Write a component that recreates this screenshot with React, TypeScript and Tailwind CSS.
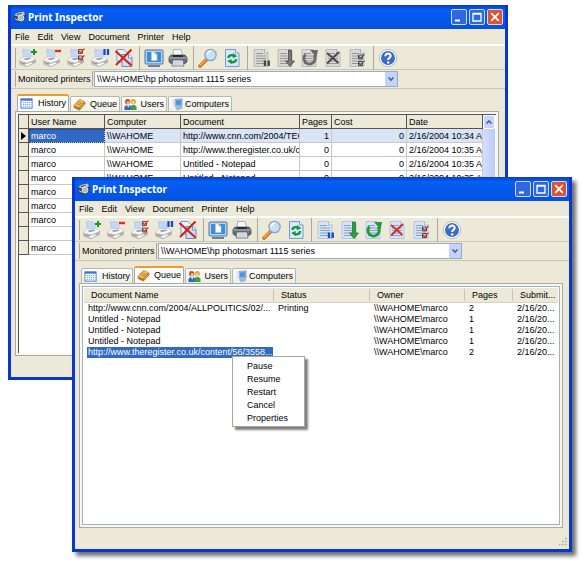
import type { ReactNode } from 'react'

type Tab = 'History' | 'Queue' | 'Users' | 'Computers'

const menus = ['File', 'Edit', 'View', 'Document', 'Printer', 'Help']

const historyRows = [
  { user: 'marco', computer: '\\\\WAHOME', doc: 'http://www.cnn.com/2004/TEC', pages: '1', cost: '0', date: '2/16/2004 10:34 AM' },
  { user: 'marco', computer: '\\\\WAHOME', doc: 'http://www.theregister.co.uk/c', pages: '0', cost: '0', date: '2/16/2004 10:35 AM' },
  { user: 'marco', computer: '\\\\WAHOME', doc: 'Untitled - Notepad', pages: '0', cost: '0', date: '2/16/2004 10:35 AM' },
  { user: 'marco', computer: '\\\\WAHOME', doc: 'Untitled - Notepad', pages: '0', cost: '0', date: '2/16/2004 10:35 AM' },
  { user: 'marco' },
  { user: 'marco' },
  { user: 'marco' },
  { user: '' },
  { user: 'marco' },
]

const queueRows = [
  { doc: 'http://www.cnn.com/2004/ALLPOLITICS/02/...', status: 'Printing', pages: '2' },
  { doc: 'Untitled - Notepad', status: '', pages: '1' },
  { doc: 'Untitled - Notepad', status: '', pages: '1' },
  { doc: 'Untitled - Notepad', status: '', pages: '1' },
  { doc: 'http://www.theregister.co.uk/content/56/3558...', status: '', pages: '2' },
]

function Icon({ children }: { children: ReactNode }) {
  return (
    <svg viewBox="0 0 20 20" className="size-5" aria-hidden="true">
      {children}
    </svg>
  )
}

function PrinterBase() {
  return (
    <>
      <path d="M4.5 1.5 12 2 13.5 9.5 6 11.5Z" fill="#c3d8f8" stroke="#a9bfe2" strokeWidth=".6" />
      <path d="M1.5 12.5 5.5 9 14 8.5 17.5 11 17.5 14.5 9 18.8 2 16.3Z" fill="#c4c4c2" stroke="#a3a3a1" strokeWidth=".6" />
      <path d="M1.5 12.5 5.5 9 14 8.5 17.5 11 9.5 14.5Z" fill="#f7f7f6" />
      <path d="M5.5 11 7.2 10 12.6 9.6 13.4 10.4 8.5 12.2Z" fill="#9aa6b8" />
      <path d="M2.5 14.5 9.5 16.8 17 13" fill="none" stroke="#8a8a88" strokeWidth=".9" />
      <path d="M6 16.5 13 14.2 15.5 15 9 18.5Z" fill="#fff" stroke="#a8a8a6" strokeWidth=".5" />
    </>
  )
}

function PagePath({ color }: { color: boolean }) {
  return (
    <>
      <path d="M2 1.5H13L16 4.5V18.5H2Z" fill={color ? '#d6e4fa' : '#d9d9d7'} stroke={color ? '#a6bddf' : '#b1b1ae'} strokeWidth=".8" />
      <path d="M12.5 1.5V5H16" fill="#fff" stroke={color ? '#8faad2' : '#999'} strokeWidth=".8" />
      <path d="M4 5.5H11M4 8H14M4 10.5H14M4 13H14M4 15.5H14" stroke={color ? '#8195b8' : '#8f8f8f'} strokeWidth=".9" />
    </>
  )
}

function AddPrinter() {
  return (
    <Icon>
      <PrinterBase />
      <path d="M16 1V7M13 4H19" stroke="#129a2b" strokeWidth="2" />
    </Icon>
  )
}

function RemovePrinter() {
  return (
    <Icon>
      <PrinterBase />
      <path d="M13 3H19" stroke="#e0301c" strokeWidth="2.4" />
    </Icon>
  )
}

function PrinterOptions() {
  return (
    <Icon>
      <PrinterBase />
      <path d="M12.5 1.5H16.5V5.5H12.5ZM12.5 8H16.5V12H12.5Z" fill="#f0d4cc" stroke="#6b4a42" />
      <path d="m13 3 1.5 1.7L18.5.7M13 9.6l1.5 1.7 4-4" fill="none" stroke="#d3341c" strokeWidth="1.2" />
    </Icon>
  )
}

function PausePrinter() {
  return (
    <Icon>
      <PrinterBase />
      <path d="M14.5 1V7M18 1V7" stroke="#1746d8" strokeWidth="2.3" />
    </Icon>
  )
}

function DeleteDocuments() {
  return (
    <Icon>
      <path d="M3 1.5H10L13 4.5V14H3Z" fill="#e8f0fc" stroke="#7f9bc8" />
      <path d="M8 6.5H15L18 9.5V18.5H8Z" fill="#cfdef5" stroke="#6d8abc" />
      <path d="M14.5 6.5V10H18" fill="#fff" stroke="#6d8abc" />
      <path d="M1.5 3 17.5 17.5M17.5 1.5 2 17" stroke="#cf2417" strokeWidth="2.1" />
    </Icon>
  )
}

function Monitor() {
  return (
    <Icon>
      <rect x="1" y="2" width="18" height="14" rx="1" fill="#b3d3ee" stroke="#4b73a5" />
      <rect x="3" y="4" width="14" height="10" fill="#3f8ed5" />
      <path d="M7.5 4H11L13 6V12.5H7.5Z" fill="#fff" stroke="#a8c7e9" strokeWidth=".5" />
      <path d="M11 4V6H13" fill="none" stroke="#5d8ec6" strokeWidth=".7" />
      <path d="M4 18H16" stroke="#68859d" strokeWidth="2" />
    </Icon>
  )
}

function PrintIcon() {
  return (
    <Icon>
      <path d="M5.5 1.5H13L15 8H5Z" fill="#f4f7fc" stroke="#8a93a2" strokeWidth=".7" />
      <path d="M3 7H17L19 9.5V14L17 15.5H3L1 14V9.5Z" fill="#686d77" stroke="#454950" strokeWidth=".7" />
      <path d="M5 7H15V9H5Z" fill="#282c33" />
      <path d="M1.5 10H18.5" stroke="#b5bac4" />
      <path d="M5 12H15L16 18H4Z" fill="#eef2f8" stroke="#60656d" strokeWidth=".8" />
      <path d="M6 14H14M5.5 16H14.5" stroke="#a2adbd" strokeWidth=".8" />
    </Icon>
  )
}

function Magnifier() {
  return (
    <Icon>
      <path d="M8 12 2 18" stroke="#b86818" strokeWidth="3.6" strokeLinecap="round" />
      <path d="M7.5 12 2 17.5" stroke="#f2a447" strokeWidth="1.8" strokeLinecap="round" />
      <circle cx="12.5" cy="7" r="5.6" fill="#c7e1fb" stroke="#8ba4c3" strokeWidth="1.4" />
      <path d="M9.2 6.5A3.7 3.7 0 0 1 13 3.3" fill="none" stroke="#fff" strokeWidth="1.5" />
    </Icon>
  )
}

function RefreshPage() {
  return (
    <Icon>
      <path d="M3.5 1.5H13.5L17 5V18.5H3.5Z" fill="#d7e8fb" stroke="#779bcb" />
      <path d="M13.5 1.5V5H17" fill="#fff" stroke="#779bcb" />
      <path d="M6.5 10C6.5 7 9.5 6.5 12 8M14 11C14 14 11 15 8.5 13.5" fill="none" stroke="#16973a" strokeWidth="2.4" />
      <path d="M11 5 15.3 8.3 10.8 10.3ZM9.5 11 5.2 13 9.8 16.3Z" fill="#16973a" />
    </Icon>
  )
}

function PauseJob({ color }: { color: boolean }) {
  return (
    <Icon>
      <PagePath color={color} />
      <path d="M13 12.5V18M16.7 12.5V18" stroke={color ? '#1748e0' : '#454545'} strokeWidth="2.4" />
    </Icon>
  )
}

function ResumeJob({ color }: { color: boolean }) {
  return (
    <Icon>
      <PagePath color={color} />
      <path d="M12.5 2H15.5V13H18.5L14 18.5 9.5 13H12.5Z" fill={color ? '#2da143' : '#777'} stroke={color ? '#187d2f' : '#4b4b4b'} strokeWidth=".8" />
    </Icon>
  )
}

function RestartJob({ color }: { color: boolean }) {
  return (
    <Icon>
      <PagePath color={color} />
      <path d="M5.5 6.5A5.6 5.6 0 1 0 14 7" fill="none" stroke={color ? '#20993b' : '#6a6a6a'} strokeWidth="3" />
      <path d="M10 2H18L16.5 9.5Z" fill={color ? '#20993b' : '#6a6a6a'} />
    </Icon>
  )
}

function CancelJob({ color }: { color: boolean }) {
  return (
    <Icon>
      <PagePath color={color} />
      <path d="M3 5 14.5 15M15 4 3 15.5" stroke={color ? '#d33120' : '#484848'} strokeWidth="1.8" />
    </Icon>
  )
}

function JobProperties({ color }: { color: boolean }) {
  return (
    <Icon>
      <PagePath color={color} />
      <path d="M10.5 7H14.5V11H10.5ZM10.5 13.5H14.5V17.5H10.5Z" fill={color ? '#f3ded8' : '#ddd'} stroke="#444" />
      <path d="m11 8.5 1.5 1.7 4-4M11 15l1.5 1.7 4-4" fill="none" stroke={color ? '#d33120' : '#555'} strokeWidth="1.2" />
    </Icon>
  )
}

function HelpIcon() {
  return (
    <Icon>
      <circle cx="10" cy="10" r="8.6" fill="#fff" stroke="#b4bdd0" />
      <circle cx="10" cy="10" r="7" fill="#3b6cca" />
      <path d="M7.3 8.2C7.3 4.5 13 4.8 12.7 8 12.5 9.7 10.2 9.7 10.2 12" fill="none" stroke="#fff" strokeWidth="2" />
      <circle cx="10.2" cy="14.4" r="1.2" fill="#fff" />
    </Icon>
  )
}

function AppIcon() {
  return (
    <svg viewBox="0 0 14 14" className="size-3.5" aria-hidden="true">
      <path d="M1 5 5 2 11 1 13 5 12 10 6 13 1 10Z" fill="#39424f" />
      <path d="M1 5 5 2.5 11 1.5 12 4.5 6 7Z" fill="#b9c3cf" />
      <path d="M4 4.6 8.5 3.4" stroke="#39424f" />
      <circle cx="8" cy="8" r="3" fill="#a6bdd5" stroke="#e6ecf2" strokeWidth=".8" />
      <path d="M2 8.5 5 10.5" stroke="#d8dee5" />
    </svg>
  )
}

function TabIcon({ name }: { name: Tab }) {
  return (
    <svg viewBox="0 0 14 14" className="size-[13px] shrink-0" aria-hidden="true">
      {name === 'History' && (
        <>
          <rect x="1" y="2" width="12" height="10" fill="#fff" stroke="#3a78cf" />
          <path d="M1 3H13" stroke="#3a78cf" strokeWidth="2" />
          <path d="M3 6H11M3 8H11M3 10H11" stroke="#6c9ade" strokeDasharray="1.5 .7" />
        </>
      )}
      {name === 'Queue' && (
        <>
          <path d="M1 8 7 1.5 12.5 4 13 6.5 7 13 1.5 10.5Z" fill="#b57918" stroke="#7d510f" strokeWidth=".6" />
          <path d="M1 8 7 1.5 12.5 4 6.5 10.2Z" fill="#f0ba55" />
          <path d="M3.5 6 9 8.2M5 4 10.8 6.5" stroke="#b8791d" strokeWidth=".8" />
          <path d="m8 10.5 4-4" stroke="#fae1a8" strokeWidth=".8" />
        </>
      )}
      {name === 'Users' && (
        <>
          <circle cx="4" cy="4" r="2.8" fill="#d5452b" />
          <circle cx="4.5" cy="5" r="1.8" fill="#f0bd8c" />
          <path d="M0.5 13V9.5L3 7.5H6L8 9.5V13Z" fill="#2c68ca" />
          <circle cx="10" cy="4" r="2.8" fill="#d8ac35" />
          <circle cx="9.8" cy="5" r="1.8" fill="#f3cda0" />
          <path d="M7 13V9L9 7.5H11.5L13.5 9.5V13Z" fill="#3c9e4c" />
          <path d="m3.3 7.5 1.2 3 1.3-3" fill="#fff" />
        </>
      )}
      {name === 'Computers' && (
        <>
          <path d="M4 1.5 12 .8V8.5L4.5 9Z" fill="#9fc5f0" stroke="#6d91bf" strokeWidth=".7" />
          <path d="M5.3 2.7 10.8 2.2V7.2L5.5 7.7Z" fill="#4c94e2" />
          <path d="M1.5 2 4 1.5V10L2 9Z" fill="#dce4ed" />
          <path d="M5 10.5 11 9 12 11 6.5 13Z" fill="#a9bdd2" stroke="#7990aa" strokeWidth=".5" />
        </>
      )}
    </svg>
  )
}

function ToolButton({ label, children }: { label: string; children: ReactNode }) {
  return (
    <button type="button" aria-label={label} className="flex h-6 w-6 items-center justify-center">
      {children}
    </button>
  )
}

function Separator() {
  return <div className="mr-0.5 ml-[3px] h-6 w-px bg-[#aca899]" />
}

function Toolbar({ color }: { color: boolean }) {
  return (
    <div className="flex h-[26px] items-center border-t-2 border-b border-t-white border-b-[#c9c6b8] pl-1">
      <div className="h-5 w-px bg-[#aca899]" />
      <ToolButton label="Add printer"><AddPrinter /></ToolButton>
      <ToolButton label="Remove printer"><RemovePrinter /></ToolButton>
      <ToolButton label="Printer options"><PrinterOptions /></ToolButton>
      <ToolButton label="Pause printer"><PausePrinter /></ToolButton>
      <ToolButton label="Delete all documents"><DeleteDocuments /></ToolButton>
      <Separator />
      <ToolButton label="Monitor"><Monitor /></ToolButton>
      <ToolButton label="Print"><PrintIcon /></ToolButton>
      <Separator />
      <ToolButton label="Find"><Magnifier /></ToolButton>
      <ToolButton label="Refresh"><RefreshPage /></ToolButton>
      <Separator />
      <ToolButton label="Pause job"><PauseJob color={color} /></ToolButton>
      <ToolButton label="Resume job"><ResumeJob color={color} /></ToolButton>
      <ToolButton label="Restart job"><RestartJob color={color} /></ToolButton>
      <ToolButton label="Cancel job"><CancelJob color={color} /></ToolButton>
      <ToolButton label="Job properties"><JobProperties color={color} /></ToolButton>
      <Separator />
      <ToolButton label="Help"><HelpIcon /></ToolButton>
    </div>
  )
}

function TitleBar() {
  const box = 'flex size-4 items-center justify-center rounded-[2px] border border-[#cfdcf8]'
  return (
    <div className="flex h-6 items-center bg-linear-to-b from-[#0a3fc0] via-[#0560f5] via-20% to-[#0450e0] px-0.5">
      <AppIcon />
      <h1 className="ml-px flex-1 font-['Noto_Sans',sans-serif] text-[10px] font-bold text-white">Print Inspector</h1>
      <div className="flex gap-0.5">
        <button type="button" aria-label="Minimize" className={`${box} bg-[#2f67e3]`}>
          <svg viewBox="0 0 14 14" className="size-3.5"><path d="M3 10.5H8" stroke="#fff" strokeWidth="2" /></svg>
        </button>
        <button type="button" aria-label="Maximize" className={`${box} bg-[#2f67e3]`}>
          <svg viewBox="0 0 14 14" className="size-3.5"><path d="M3 3.5H11V11H3ZM3 4H11" fill="none" stroke="#fff" strokeWidth="1.3" /></svg>
        </button>
        <button type="button" aria-label="Close" className={`${box} bg-[#dc5432]`}>
          <svg viewBox="0 0 14 14" className="size-3.5"><path d="M3.2 3.2 10.8 10.8M10.8 3.2 3.2 10.8" stroke="#fff" strokeWidth="1.8" /></svg>
        </button>
      </div>
    </div>
  )
}

const tabs: { name: Tab; width: string }[] = [
  { name: 'History', width: 'w-[52px]' },
  { name: 'Queue', width: 'w-[50px]' },
  { name: 'Users', width: 'w-[46px]' },
  { name: 'Computers', width: 'w-16' },
]

function TabStrip({ active }: { active: Tab }) {
  return (
    <div role="tablist" className="flex h-[17px] items-end gap-px pl-0.5">
      {tabs.map(({ name, width }) => (
        <button
          key={name}
          type="button"
          role="tab"
          aria-selected={name === active}
          className={`flex items-center justify-between rounded-t-[2px] border border-b-0 px-0.5 ${width} ${
            name === active
              ? 'h-[17px] border-x-[#a5a9a6] border-t-2 border-t-[#ef9a2a] bg-[#fcfcfa] pb-px'
              : 'h-[15px] border-[#b4b7b2] bg-linear-to-b from-[#fcfcfa] to-[#f0efe6]'
          }`}
        >
          <TabIcon name={name} />
          {name}
        </button>
      ))}
    </div>
  )
}

function InspectorWindow({ id, active, className, children }: { id: string; active: Tab; className: string; children: ReactNode }) {
  return (
    <section className={`absolute flex h-[375px] flex-col border-x-[3px] border-b-[3px] border-[#0a37cb] bg-[#ece9d8] ${className}`}>
      <TitleBar />
      <nav className="flex h-[15px] items-center gap-2 pl-1">
        {menus.map((m) => (
          <button key={m} type="button">{m}</button>
        ))}
      </nav>
      <Toolbar color={active === 'Queue'} />
      <div className="flex h-[19px] items-center border-b border-[#c9c6b8] pl-1">
        <div className="h-4 w-px bg-[#aca899]" />
        <label htmlFor={id} className="ml-0.5 w-[74px] whitespace-nowrap">Monitored printers</label>
        <div className="mr-px h-4 w-px bg-[#aca899]" />
        <div className="relative">
          <select id={id} className="h-4 w-[304px] appearance-none border border-[#9caabb] bg-white pl-0.5">
            <option>{'\\\\WAHOME\\hp photosmart 1115 series'}</option>
          </select>
          <span className="pointer-events-none absolute top-px right-px flex h-3.5 w-3 items-center justify-center bg-[#c3d3fb]">
            <svg viewBox="0 0 8 8" className="size-2"><path d="M1.5 2.5 4 5 6.5 2.5" fill="none" stroke="#4d6185" strokeWidth="1.6" /></svg>
          </span>
        </div>
      </div>
      <div className="flex min-h-0 flex-1 flex-col pt-[5px] pr-1.5 pl-1">
        <TabStrip active={active} />
        {children}
      </div>
      <footer className="flex h-[21px] items-end justify-end p-0.5">
        {active === 'Queue' && (
          <svg viewBox="0 0 10 10" className="size-2.5">
            <path d="M8 1.5H9.5M5 4.5H6.5M8 4.5H9.5M2 7.5H3.5M5 7.5H6.5M8 7.5H9.5" stroke="#aaa692" strokeWidth="1.5" />
          </svg>
        )}
      </footer>
    </section>
  )
}

function HistoryPane() {
  const head = 'border-r border-b border-r-[#55544d] border-b-[#55544d] bg-[#ece9d8] pl-0.5 text-left font-normal'
  const cell = 'overflow-hidden border-r border-b border-[#c8c8c4] px-0.5'
  return (
    <div className="flex min-h-0 flex-1 border border-[#a9aaa0] bg-[#f8f7f2] p-0.5">
      <div className="flex min-w-0 flex-1 border-t border-l border-[#55544d] bg-white">
        <div className="min-w-0 flex-1">
          <table className="w-full table-fixed border-separate border-spacing-0 whitespace-nowrap">
            <colgroup>
              <col className="w-[10px]" />
              <col className="w-[76px]" />
              <col className="w-[76px]" />
              <col />
              <col className="w-8" />
              <col className="w-[75px]" />
              <col className="w-[76px]" />
            </colgroup>
            <thead>
              <tr className="h-3.5">
                <th className={head} aria-label="Current row" />
                <th className={head}>User Name</th>
                <th className={head}>Computer</th>
                <th className={head}>Document</th>
                <th className={head}>Pages</th>
                <th className={head}>Cost</th>
                <th className={head}>Date</th>
              </tr>
            </thead>
            <tbody>
              {historyRows.map((r, i) => (
                <tr key={i} className={`h-3.5 ${i === 0 ? 'bg-[#d9e4f7]' : ''}`}>
                  <td className="border-r border-b border-[#55544d] bg-[#ece9d8]">
                    {i === 0 && (
                      <svg viewBox="0 0 8 10" className="h-2.5 w-2"><path d="M2 1 7 5 2 9Z" /></svg>
                    )}
                  </td>
                  <td className={`${cell} ${i === 0 ? 'bg-[#316ac5] text-white outline-1 -outline-offset-1 outline-dotted outline-[#1d3c72]' : ''}`}>{r.user}</td>
                  <td className={cell}>{r.computer}</td>
                  <td className={cell}>{r.doc}</td>
                  <td className={`${cell} text-right`}>{r.pages}</td>
                  <td className={`${cell} text-right`}>{r.cost}</td>
                  <td className={cell}>{r.date}</td>
                </tr>
              ))}
            </tbody>
          </table>
        </div>
        <div className="mr-px w-3 bg-linear-to-r from-[#d5e0fd] to-[#b9cbf8]">
          <button type="button" aria-label="Scroll up" className="flex h-3.5 w-3 items-center justify-center rounded-[2px] border border-white bg-[#c6d5fc]">
            <svg viewBox="0 0 8 8" className="size-2"><path d="M1.5 5.5 4 3 6.5 5.5" fill="none" stroke="#4d6185" strokeWidth="1.6" /></svg>
          </button>
        </div>
      </div>
    </div>
  )
}

function QueuePane() {
  const head = 'border-b border-[#d6d2c2] bg-[#ece9d8] text-left font-normal'
  const rule = 'block h-3 border-l border-[#c7c5b2] pl-[7px] leading-3'
  return (
    <div className="min-h-0 flex-1 border border-[#a9aaa0] bg-[#f8f7f2] p-0.5">
      <div className="h-full border border-[#9db0c4] bg-white px-px pt-px">
        <table className="w-full table-fixed border-separate border-spacing-0 whitespace-nowrap">
          <colgroup>
            <col />
            <col className="w-24" />
            <col className="w-[95px]" />
            <col className="w-12" />
            <col className="w-[46px]" />
          </colgroup>
          <thead>
            <tr className="h-[15px]">
              <th className={`${head} pl-[7px]`}>Document Name</th>
              <th className={head}><span className={rule}>Status</span></th>
              <th className={head}><span className={rule}>Owner</span></th>
              <th className={head}><span className={rule}>Pages</span></th>
              <th className={head}><span className={rule}>Submit...</span></th>
            </tr>
          </thead>
          <tbody>
            {queueRows.map((r, i) => (
              <tr key={i} className="h-[11px] leading-[11px]">
                <td className="pl-[3px]">
                  <span className={`block overflow-hidden pl-px ${i === 4 ? 'bg-[#316ac5] text-white' : ''}`}>{r.doc}</span>
                </td>
                <td className="pl-[5px]">{r.status}</td>
                <td className="pl-[5px]">{'\\\\WAHOME\\marco'}</td>
                <td className="pl-[5px]">{r.pages}</td>
                <td className="pl-[5px]">2/16/20...</td>
              </tr>
            ))}
          </tbody>
        </table>
      </div>
    </div>
  )
}

function ContextMenu() {
  return (
    <div role="menu" className="absolute top-[356px] left-[232px] flex w-[73px] flex-col border border-[#aca899] bg-white py-0.5 shadow-[3px_3px_2px_#00000080]">
      {['Pause', 'Resume', 'Restart', 'Cancel', 'Properties'].map((item) => (
        <button key={item} type="button" role="menuitem" className="h-[13px] pl-3.5 text-left">
          {item}
        </button>
      ))}
    </div>
  )
}

export default function App() {
  return (
    <main className="relative min-h-screen overflow-hidden bg-white font-['Liberation_Sans',sans-serif] text-[9px] leading-[12px] text-black">
      <InspectorWindow id="history-printer" active="History" className="top-[5px] right-[76px] left-2">
        <HistoryPane />
      </InspectorWindow>
      <InspectorWindow id="queue-printer" active="Queue" className="top-[177px] right-3 left-[72px] shadow-[4px_4px_4px_#00000090]">
        <QueuePane />
      </InspectorWindow>
      <ContextMenu />
    </main>
  )
}
